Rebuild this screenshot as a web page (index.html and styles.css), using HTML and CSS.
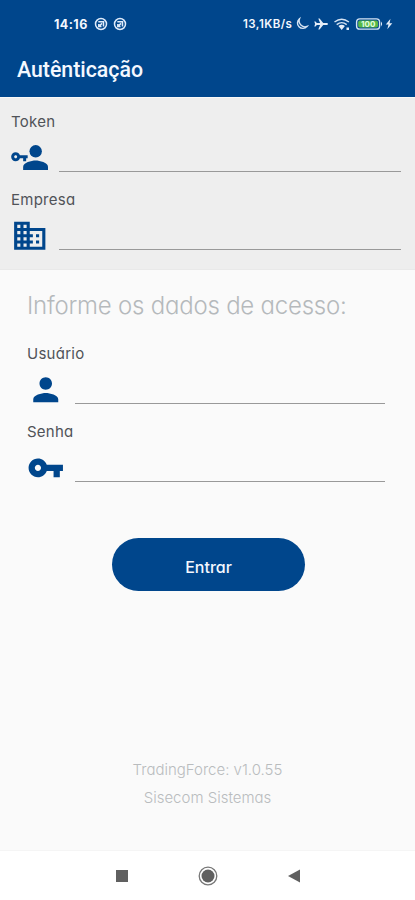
FILE: index.html
```html
<!DOCTYPE html>
<html lang="pt-BR">
<head>
  <meta charset="UTF-8" />
  <meta name="viewport" content="width=device-width, initial-scale=1.0"/>
  <title>Autênticação</title>
  <link rel="stylesheet" href="styles.css">
</head>
<body>
  <header>
    <div class="status-bar">
      <span class="clock">14:16</span>
      <svg class="badge-icon" viewBox="0 0 14 14"><circle cx="7" cy="7" r="5.5"/><path d="M4.300 4.800h5.200v4.700M5 9.400l3-3M4.800 7v2.600h2.700"/></svg>
      <svg class="badge-icon" viewBox="0 0 14 14"><circle cx="7" cy="7" r="5.5"/><path d="M4.300 4.800h5.200v4.700M5 9.400l3-3M4.800 7v2.600h2.700"/></svg>
      <span class="speed">13,1KB/s</span>
      <svg class="system-icons" viewBox="0 0 100 16">
        <path class="line" d="M4.500 2.800A5.400 5.400 0 1 0 12 10.500A6 6 0 0 1 4.500 2.800z"/>
        <path d="M33 8q0-.9-1.200-.9h-3.600L24.600 2.500h-1.300l1.800 4.600h-3.300l-1.300-1.600h-1.200l.8 2.500-.8 2.500h1.200l1.300-1.600h3.300l-1.800 4.600h1.300l3.600-4.600h3.600Q33 8.900 33 8z"/>
        <path class="line" d="M39.500 6q7.200-5.600 14.400 0M41.700 8.600q5-4 10 0"/>
        <path d="M43.500 10q3.200-2.400 6.400 0L46.700 14zM51.500 11.500h2.500v2.500h-2.500z"/>
        <rect class="line" x="61.600" y="2.900" width="23" height="10.200" rx="3.200"/>
        <rect class="charge" x="63.200" y="4.500" width="19.800" height="7" rx="1.800"/>
        <path d="M86 5.600q2.200 2.400 0 4.800z"/>
        <text x="73.200" y="10.800" text-anchor="middle">100</text>
        <path d="M95.500 2.800L90.800 8.500h2.700l-1.200 4.800 5-6h-2.800z"/>
      </svg>
    </div>
    <h1>Autênticação</h1>
  </header>

  <form>
    <section class="company">
      <label for="token">Token</label>
      <div class="field">
        <svg class="icon" viewBox="0 0 38 38">
          <circle cx="25" cy="12.500" r="6.300"/>
          <path d="M12.300 31.500v-3.200c0-4.200 8.400-6.400 12.600-6.400s12.600 2.200 12.600 6.400v3.200z"/>
          <path transform="translate(-.6 8.800) scale(.76)" d="M12.650 10C11.830 7.670 9.610 6 7 6c-3.310 0-6 2.690-6 6s2.690 6 6 6c2.610 0 4.830-1.670 5.650-4H17v4h4v-4h2v-4H12.650zM7 14c-1.100 0-2-.9-2-2s.9-2 2-2 2 .9 2 2-.9 2-2 2z"/>
        </svg>
        <input type="text" id="token">
      </div>
      <label for="empresa">Empresa</label>
      <div class="field">
        <svg class="icon" viewBox="0 0 24 24"><path d="M12 7V3H2v18h20V7H12zM6 19H4v-2h2v2zm0-4H4v-2h2v2zm0-4H4V9h2v2zm0-4H4V5h2v2zm4 12H8v-2h2v2zm0-4H8v-2h2v2zm0-4H8V9h2v2zm0-4H8V5h2v2zm10 12h-8v-2h2v-2h-2v-2h2v-2h-2V9h8v10zm-2-8h-2v2h2v-2zm0 4h-2v2h2v-2z"/></svg>
        <input type="text" id="empresa">
      </div>
    </section>

    <section class="access">
      <h2>Informe os dados de acesso:</h2>
      <label for="usuario">Usuário</label>
      <div class="field">
        <svg class="icon" viewBox="0 0 24 24"><path d="M12 12c2.210 0 4-1.790 4-4s-1.790-4-4-4-4 1.790-4 4 1.790 4 4 4zm0 2c-2.670 0-8 1.340-8 4v2h16v-2c0-2.660-5.330-4-8-4z"/></svg>
        <input type="text" id="usuario">
      </div>
      <label for="senha">Senha</label>
      <div class="field">
        <svg class="icon" viewBox="0 0 24 24"><path d="M12.650 10C11.830 7.670 9.610 6 7 6c-3.310 0-6 2.690-6 6s2.690 6 6 6c2.610 0 4.830-1.670 5.650-4H17v4h4v-4h2v-4H12.650zM7 14c-1.100 0-2-.9-2-2s.9-2 2-2 2 .9 2 2-.9 2-2 2z"/></svg>
        <input type="password" id="senha">
      </div>
      <button type="submit">Entrar</button>
    </section>
  </form>

  <footer>
    <p>TradingForce: v1.0.55</p>
    <p>Sisecom Sistemas</p>
  </footer>

  <nav>
    <svg viewBox="0 0 20 20"><rect x="4" y="4" width="12" height="12"/></svg>
    <svg viewBox="0 0 20 20"><circle class="ring" cx="10" cy="10" r="8.800"/><circle cx="10" cy="10" r="6.500"/></svg>
    <svg viewBox="0 0 20 20"><path d="M16 3.500v13L4 10z"/></svg>
  </nav>
</body>
</html>
```
FILE: styles.css
```css
* {
  box-sizing: border-box;
}
body {
  margin: 0;
  height: 900px;
  display: flex;
  flex-direction: column;
  font-family: Inter, sans-serif;
  font-feature-settings: "cv11";
  background-color: #fafafa;
  color: #505358;
  overflow: hidden;
}
header {
  height: 97px;
  background-color: #00468c;
  color: #f4f8ff;
}
.status-bar {
  height: 48px;
  padding-left: 54px;
  display: flex;
  align-items: center;
  font-weight: 700;
  white-space: nowrap;
}
.clock {
  width: 40px;
  font-size: 12.5px;
  letter-spacing: 0.45px;
}
.badge-icon {
  width: 14px;
  height: 14px;
  margin-right: 5px;
  fill: none;
  stroke: #dfebfa;
  stroke-width: 1.5;
}
.speed {
  width: 52px;
  margin-left: 111px;
  font-size: 11.5px;
  font-weight: 600;
  letter-spacing: 0.45px;
}
.system-icons {
  width: 100px;
  height: 16px;
  fill: #e4edf8;
}
.system-icons .line {
  fill: none;
  stroke: #d5e3f3;
  stroke-width: 1.4;
}
.system-icons .charge {
  fill: #58b947;
}
.system-icons text {
  font-size: 8px;
  fill: #e5ffe0;
}
h1 {
  margin: 9px 0 0 17px;
  font-family: Roboto, sans-serif;
  font-size: 21.3px;
  font-weight: 500;
  line-height: 26px;
}
.company {
  height: 173px;
  padding: 14px 14px 0 11px;
  background-color: #eee;
  border-top: 1px solid #f8f8f8;
  border-bottom: 1px solid #e9e9e9;
}
.access {
  padding: 20px 30px 0 27px;
}
label {
  display: block;
  height: 20px;
  font-size: 15px;
  line-height: 20px;
  letter-spacing: 0.25px;
}
.field {
  height: 58px;
  display: flex;
  gap: 10px;
  padding-top: 7px;
}
.icon {
  width: 37.5px;
  height: 37.5px;
  margin-right: 0.5px;
  flex: none;
  fill: #00468c;
}
input {
  flex: 1;
  min-width: 0;
  height: 33px;
  padding: 0;
  border: none;
  border-bottom: 1px solid #999;
  background: transparent;
  font: inherit;
  outline: none;
}
h2 {
  margin: 0 0 23px;
  font-size: 24px;
  font-weight: 300;
  line-height: 31px;
  letter-spacing: -0.22px;
  color: #b5b9bc;
  white-space: nowrap;
}
button {
  display: block;
  width: 193px;
  height: 53px;
  margin: 38px 0 0 85px;
  padding: 4px 0 0;
  border: none;
  border-radius: 27px;
  background-color: #00468c;
  color: #f4f8ff;
  font: 500 16px Inter, sans-serif;
  font-feature-settings: "cv11";
}
footer {
  margin-top: auto;
  height: 94px;
  text-align: center;
  font-size: 15px;
  font-weight: 300;
  color: #b9bcbe;
}
footer p {
  margin: 0;
  line-height: 28px;
}
nav {
  height: 50px;
  display: flex;
  gap: 66px;
  justify-content: center;
  align-items: center;
  background-color: #fff;
  border-top: 1px solid #f5f5f5;
}
nav svg {
  width: 20px;
  height: 20px;
  fill: #606060;
}
nav .ring {
  fill: none;
  stroke: #777;
  stroke-width: 1.3;
}
```
